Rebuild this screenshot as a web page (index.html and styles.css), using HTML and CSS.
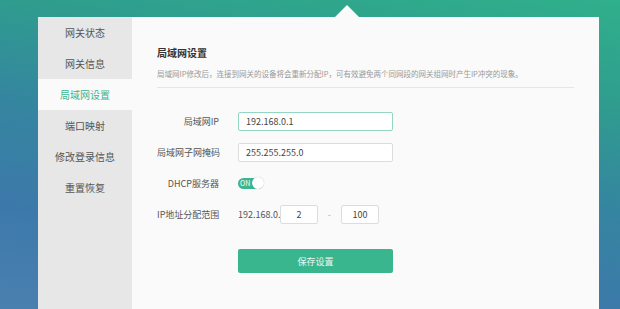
FILE: index.html
```html
<!DOCTYPE html>
<html>
<head>
    <title>局域网设置</title>
    <link rel="stylesheet" href="styles.css">
</head>
<body>
    <div class="page">
        <div class="panel">
            <div class="sidebar">
                <a class="nav-item">网关状态</a>
                <a class="nav-item">网关信息</a>
                <a class="nav-item active">局域网设置</a>
                <a class="nav-item">端口映射</a>
                <a class="nav-item">修改登录信息</a>
                <a class="nav-item">重置恢复</a>
            </div>
            <div class="content">
                <h1 class="title">局域网设置</h1>
                <p class="desc">局域网IP修改后，连接到网关的设备将会重新分配IP，可有效避免两个同网段的网关组网时产生IP冲突的现象。</p>
                <div class="divider"></div>

                <form class="form">
                    <div class="row">
                        <label class="label" for="lanIp">局域网IP</label>
                        <input class="input focus" type="text" id="lanIp" value="192.168.0.1">
                    </div>
                    <div class="row">
                        <label class="label" for="mask">局域网子网掩码</label>
                        <input class="input" type="text" id="mask" value="255.255.255.0">
                    </div>
                    <div class="row">
                        <span class="label">DHCP服务器</span>
                        <span class="switch"><span class="switch-text">ON</span><span class="knob"></span></span>
                    </div>
                    <div class="row">
                        <span class="label">IP地址分配范围</span>
                        <span class="prefix">192.168.0.</span>
                        <input class="input small" type="text" value="2">
                        <span class="dash">-</span>
                        <input class="input small" type="text" value="100">
                    </div>
                    <div class="row actions">
                        <button type="button" class="save">保存设置</button>
                    </div>
                </form>
            </div>
        </div>
    </div>
</body>
</html>
```

FILE: styles.css
```css
html, body { height: 100%; }
body {
    margin: 0;
    overflow: hidden;
    font-family: "Noto Sans CJK SC", "Noto Sans", sans-serif;
    background: linear-gradient(190deg, #30b08b 0%, #2f9d8e 25%, #3585a0 50%, #3c79aa 75%, #4a80b0 100%);
}
.page {
    padding: 17px 0 0 38px;
}
.panel {
    position: relative;
    display: flex;
    width: 561px;
    height: 292px;
    background-color: #fafafa;
}
.panel::before {
    content: "";
    position: absolute;
    left: 297px;
    top: -12px;
    border-left: 12px solid transparent;
    border-right: 12px solid transparent;
    border-bottom: 12px solid #fafafa;
}
.sidebar {
    width: 94px;
    background-color: #e7e7e7;
}
.nav-item {
    display: block;
    height: 31px;
    line-height: 31px;
    text-align: center;
    font-size: 10px;
    color: #555;
    cursor: pointer;
}
.nav-item.active {
    background-color: #fafafa;
    color: #3ab58e;
}
.content {
    flex: 1;
    padding: 29px 25px 0 25px;
}
.title {
    margin: 0;
    font-size: 10px;
    line-height: 14px;
    font-weight: bold;
    color: #333;
}
.desc {
    margin: 9px 0 0 0;
    font-size: 7.5px;
    line-height: 10px;
    color: #999;
    white-space: nowrap;
}
.divider {
    margin-top: 8px;
    height: 1px;
    background-color: #e6e6e6;
}
.form {
    margin-top: 24px;
    display: flex;
    flex-direction: column;
    gap: 12px;
}
.row {
    display: flex;
    align-items: center;
    height: 19px;
}
.label {
    width: 62px;
    margin-right: 19px;
    text-align: right;
    font-size: 9px;
    color: #555;
    white-space: nowrap;
}
.input {
    box-sizing: border-box;
    width: 155px;
    height: 19px;
    padding: 0 7px;
    border: 1px solid #dcdcdc;
    border-radius: 2px;
    background-color: #fff;
    font-family: inherit;
    font-size: 9px;
    color: #444;
    outline: none;
}
.input.focus {
    border-color: #93d6c3;
}
.input.small {
    width: 38px;
    padding: 0;
    text-align: center;
}
.prefix {
    width: 42px;
    font-size: 9px;
    color: #555;
    white-space: nowrap;
}
.dash {
    width: 23px;
    text-align: center;
    font-size: 8px;
    color: #999;
}
.switch {
    position: relative;
    display: flex;
    align-items: center;
    width: 25px;
    height: 11px;
    border-radius: 6px;
    background-color: #3bb68f;
}
.switch-text {
    padding-left: 2px;
    font-size: 7px;
    line-height: 11px;
    color: #fff;
}
.knob {
    position: absolute;
    right: -1px;
    top: -1px;
    width: 12px;
    height: 12px;
    border-radius: 50%;
    background-color: #fff;
    box-shadow: 0 0 1px rgba(0,0,0,0.3);
}
.actions {
    margin-top: 13px;
    height: 24px;
    padding-left: 81px;
}
.save {
    width: 155px;
    height: 24px;
    border: none;
    border-radius: 2px;
    background-color: #39b68e;
    color: #eaf7f2;
    font-family: inherit;
    font-size: 9px;
    cursor: pointer;
}
```
